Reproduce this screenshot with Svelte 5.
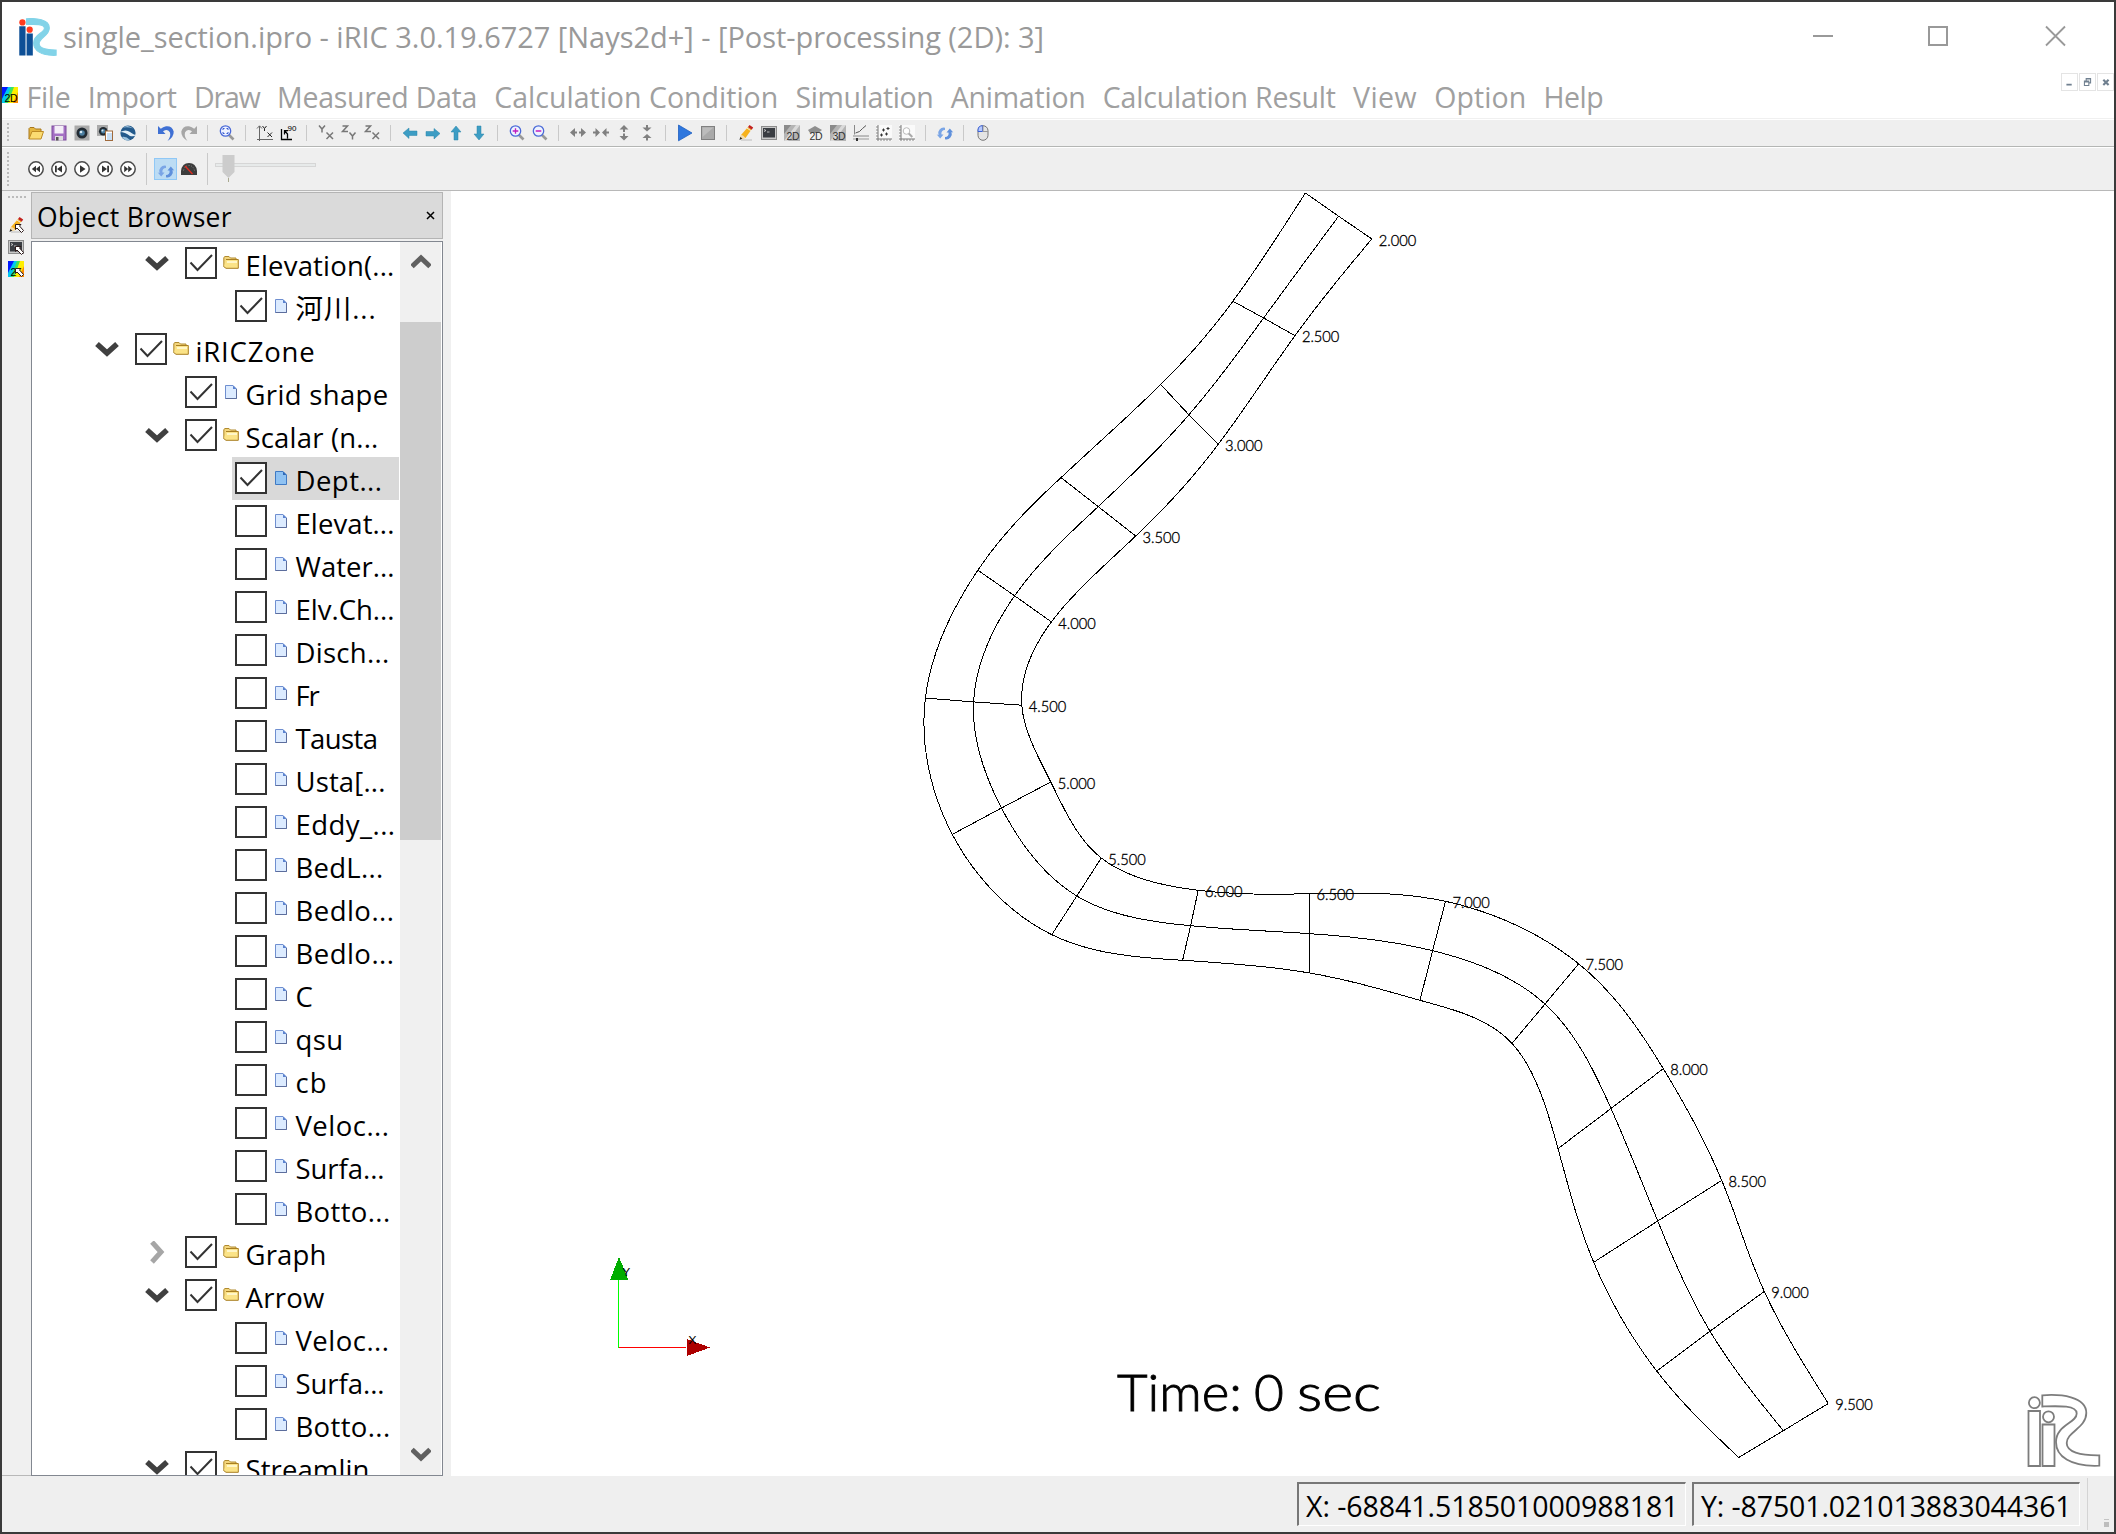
<script>
  const menus = [
    ['File', 44], ['Import', 89], ['Draw', 66], ['Measured Data', 200],
    ['Calculation Condition', 284], ['Simulation', 138], ['Animation', 135],
    ['Calculation Result', 233], ['View', 64], ['Option', 92], ['Help', 60]
  ];

  const toolbar = [
    'open', 'save', 'camera', 'cameraCopy', 'earth', '|', 'undo', 'redo', '|', 'fit', '|',
    'axes', 'rot90', '|', 'yx', 'zy', 'zx', '|', 'left', 'right', 'up', 'down', '|',
    'zoomIn', 'zoomOut', '|', 'widen', 'narrow', 'taller', 'shorter', '|', 'play', 'stop', '|',
    'pencil', 'terminal', 'post2d', 'bird2d', 'post3d', 'graph', 'scatter', 'graphZoom', '|',
    'reload', '|', 'mouse'
  ];
  const player = ['first', 'prev', 'playRound', 'next', 'last'];
  const sideTools = ['pencilPick', 'terminalPick', 'colorPick'];

  // [label, level, kind, checked, text width, expander, selected]
  const rows = [
    ['Elevation(...', 4, 'folder', true, 149, 'open'],
    ['河川...', 5, 'page', true, 81],
    ['iRICZone', 3, 'folder', true, 120, 'open'],
    ['Grid shape', 4, 'page', true, 143],
    ['Scalar (n...', 4, 'folder', true, 133, 'open'],
    ['Dept...', 5, 'page', true, 87, '', true],
    ['Elevat...', 5, 'page', false, 99],
    ['Water...', 5, 'page', false, 99],
    ['Elv.Ch...', 5, 'page', false, 99],
    ['Disch...', 5, 'page', false, 94],
    ['Fr', 5, 'page', false, 23],
    ['Tausta', 5, 'page', false, 82],
    ['Usta[...', 5, 'page', false, 90],
    ['Eddy_...', 5, 'page', false, 100],
    ['BedL...', 5, 'page', false, 88],
    ['Bedlo...', 5, 'page', false, 99],
    ['Bedlo...', 5, 'page', false, 99],
    ['C', 5, 'page', false, 18],
    ['qsu', 5, 'page', false, 48],
    ['cb', 5, 'page', false, 32],
    ['Veloc...', 5, 'page', false, 94],
    ['Surfa...', 5, 'page', false, 89],
    ['Botto...', 5, 'page', false, 95],
    ['Graph', 4, 'folder', true, 81, 'closed'],
    ['Arrow', 4, 'folder', true, 79, 'open'],
    ['Veloc...', 5, 'page', false, 94],
    ['Surfa...', 5, 'page', false, 89],
    ['Botto...', 5, 'page', false, 95],
    ['Streamlin...', 4, 'folder', true, 146, 'open']
  ].map(([label, level, kind, checked, width, expander, selected]) =>
    ({ label, level, kind, checked, width, expander, selected }));

  // River cross sections: left bank, centre, right bank
  const sections = [
    ['2.000', 1305.4, 193, 1338.6, 216.2, 1371.8, 238.9],
    ['2.500', 1232.9, 301.2, 1263.6, 318, 1295, 335.7],
    ['3.000', 1160.7, 384.5, 1188.9, 414.8, 1218.2, 444.3],
    ['3.500', 1061, 477.6, 1098.2, 506.6, 1135.7, 536],
    ['4.000', 977.9, 570.2, 1014.6, 595.8, 1051.4, 621.9],
    ['4.500', 925.4, 698.1, 973.6, 701.9, 1021.8, 705.2],
    ['5.000', 952.3, 834.4, 1001.5, 808, 1050.8, 782],
    ['5.500', 1051.8, 934.7, 1076.8, 896, 1101.3, 858],
    ['6.000', 1182.6, 960.3, 1190.6, 925.7, 1198.2, 890.3],
    ['6.500', 1309.6, 973, 1309.6, 933.7, 1309.6, 893.7],
    ['7.000', 1420, 1000.3, 1432.6, 950.7, 1445.5, 901.3],
    ['7.500', 1512, 1043.4, 1545, 1004, 1578.7, 963.8],
    ['8.000', 1558, 1148.6, 1611, 1108.5, 1663.3, 1068.7],
    ['8.500', 1593.7, 1262.3, 1657.7, 1221, 1721.7, 1180.4],
    ['9.000', 1656.7, 1371, 1710, 1331.2, 1764.3, 1291.4],
    ['9.500', 1738.7, 1457.5, 1783.3, 1430.7, 1828.3, 1403.5]
  ];

  const stations = [0];
  for (let i = 1; i < sections.length; i++) {
    const a = sections[i - 1], b = sections[i];
    stations.push(stations[i - 1] + Math.hypot(b[3] - a[3], b[4] - a[4]));
  }

  // Second derivatives of a natural cubic spline over the stations
  function secondDerivatives(y) {
    const n = y.length, t = stations, m = Array(n).fill(0), u = Array(n).fill(0);
    for (let i = 1; i < n - 1; i++) {
      const s = (t[i] - t[i - 1]) / (t[i + 1] - t[i - 1]);
      const p = s * m[i - 1] + 2;
      m[i] = (s - 1) / p;
      const d = (y[i + 1] - y[i]) / (t[i + 1] - t[i]) - (y[i] - y[i - 1]) / (t[i] - t[i - 1]);
      u[i] = ((6 * d) / (t[i + 1] - t[i - 1]) - s * u[i - 1]) / p;
    }
    m[n - 1] = 0;
    for (let k = n - 2; k >= 0; k--) m[k] = m[k] * m[k + 1] + u[k];
    return m;
  }

  function curve(col) {
    const xs = sections.map((s) => s[col]), ys = sections.map((s) => s[col + 1]);
    const mx = secondDerivatives(xs), my = secondDerivatives(ys);
    const pts = [];
    const at = (v, m, i, b) => {
      const h = stations[i + 1] - stations[i], a = 1 - b;
      return a * v[i] + b * v[i + 1] + ((a ** 3 - a) * m[i] + (b ** 3 - b) * m[i + 1]) * h * h / 6;
    };
    for (let i = 0; i < sections.length - 1; i++)
      for (let k = 0; k < 12; k++)
        pts.push(`${at(xs, mx, i, k / 12).toFixed(1)},${at(ys, my, i, k / 12).toFixed(1)}`);
    pts.push(`${xs.at(-1)},${ys.at(-1)}`);
    return pts.join(' ');
  }
  const curves = [curve(1), curve(3), curve(5)];

  // Spreads a label over the width it has in the native font
  function fit(node, width) {
    const natural = node.getBoundingClientRect().width;
    const n = [...node.textContent].length;
    node.style.letterSpacing = `${(width - natural) / n}px`;
  }

  const ring = '<circle cx="8" cy="8" r="7.200" fill="#fff" stroke="#4a4a4a" stroke-width="1.500"/>';
  const lens = (x = '') => `<path d="M9.500 9.500l5 5" stroke="#999" stroke-width="2.600"/><circle cx="6.500" cy="6" r="5.200" fill="#eef2ff" stroke="#4a6ad8" stroke-width="1.300"/>${x}`;
  const pencil = '<path d="M3 15h11" stroke="#ccc" stroke-width="1.500"/><path d="M3 10l7-8 3.500 2.500-6 8.500L2 14z" fill="#f7b21c"/><path d="M3 10l2 .5 2.500 2.500L2 14z" fill="#f3dcae"/><path d="M1.500 15l.8-3 2 1.600z" fill="#222"/><path d="M10 2l1.500-2 3.700 2.500-1.500 2.300z" fill="#c2221e"/><path d="M9 3l3.700 2.600" stroke="#eee"/>';
  const terminal = '<rect x=".5" y="1.500" width="15" height="13" fill="#c8c8c8" stroke="#8c8c8c"/><rect x="2" y="3" width="12" height="9.500" fill="#3a3d42"/><path d="M3 4.500l2 1-2 1M6 7h2.500" stroke="#ddd" fill="none" stroke-width=".8"/>';
  const cursor = '<path d="M7.500 7.500h5.500l-1.500 1.500 4 4.500-2 2-4.500-4.500-1.500 1.500z" fill="#fff" stroke="#2d1a1a" stroke-width="1"/>';
  const rainbow = '<path d="M0 0h16v16H0z" fill="#00c8f0"/><path d="M0 0h6L0 12z" fill="#0018ff"/><path d="M9 0h7v16H3z" fill="#3fe35a"/><path d="M12 0h4v16H6z" fill="#ffee00"/><path d="M16 5v11H11z" fill="#ff8a00"/>';
  const word = (t, fill = '#333') => `<text x="2.500" y="14.500" font-size="10.500" font-family="Liberation Sans" textLength="13" fill="${fill}">${t}</text>`;
  const slab = '<rect width="16" height="16" fill="#b4b4b4"/><path d="M0 0h7L0 9z" fill="#8a8a8a"/><path d="M12 0h4L4 16H0z" fill="#dadada"/>';
  const gray = (d) => `<path d="${d}" fill="#808080"/>`;
  const blue = (d) => `<path d="${d}" fill="#3d9dc4" stroke="#2b86ab" stroke-width=".5"/>`;
  const cycle = '<path d="M1.500 10A5.500 5.500 0 0 1 8 2.800V5A3.500 3.500 0 0 0 4.500 9.500H6.500L3.200 13.500-.3 9.500z" fill="#7aa5e6"/><path d="M14.500 7A5.500 5.500 0 0 1 8 14.200V12a3.500 3.500 0 0 0 3.500-4.500H9.500L12.800 3.500l3.500 4z" fill="#5f90dc"/>';
  const letters = (a, b) => `<path d="${a}${b}" fill="none" stroke="#777" stroke-width="1.500"/>`;
  const Yt = 'M1 .5l3 3.500 3-3.500M4 4v3.500', Zt = 'M1.500 1h5l-5 5.500h5.500', Xb = 'M8.500 7.500l6.500 6.500M15 7.500l-6.500 6.500', Yb = 'M8.500 7.500l3 3.500 3-3.500M11.500 11v3.500';
  const chart = '<path d="M0 0h16v16H0z" fill="#fafafa"/><path d="M2 0v16M0 14h16" stroke="#777" stroke-width="1"/><path d="M0 2h2M0 5h2M0 8h2M0 11h2M5 14v2M8 14v2M11 14v2M14 14v2" stroke="#888"/>';
  const cam = '<circle cx="8" cy="8" r="5.500" fill="#222b33"/><circle cx="8" cy="8" r="2.800" fill="#4b7ea0"/><circle cx="7" cy="7" r="1.300" fill="#d8eaf4"/>';

  const icons = {
    open: '<path d="M1 14V3.500l1-1h4l1.500 1.500H13v2.500" fill="#e5b740" stroke="#a8781e"/><path d="M1 14L4 6.500h11.500L13 14z" fill="#fbdc72" stroke="#bd8b25"/>',
    save: '<rect x="1" y="1" width="14" height="14" fill="#a470c4" stroke="#7d4b9c"/><rect x="3.500" y="1" width="9" height="7.500" fill="#f4eef8"/><rect x="4" y="11" width="8" height="4.500" fill="#ddd"/><rect x="5" y="12" width="2.500" height="3.500" fill="#555"/>',
    camera: `<rect x=".5" y=".5" width="15" height="15" rx="1" fill="#aaa" stroke="#ccc"/>${cam}`,
    cameraCopy: `<g transform="scale(.78)"><rect width="14" height="14" fill="#aaa"/>${cam}</g><rect x="8.500" y="6" width="7" height="9.500" fill="#fff" stroke="#a06a3c"/><rect x="10" y="8" width="5" height="7" fill="#c9dff5"/>`,
    earth: '<circle cx="8" cy="8" r="7.600" fill="#245a8c"/><path d="M0 7q6-3 10 0t6 3q-2 2-6 1-5-4-10-4z" fill="#e4f0f8"/><path d="M3 2.500Q8-1 13 3.500 8 1.500 3 2.500zM2 12q4-1 8 3-5 1.500-8-3z" fill="#9ec3dd"/>',
    undo: '<path d="M0 1v8h7.500L5 6.300Q10 3 12 7.500q1 4-2.500 8.500Q16 12 15.700 6.500 14 .5 8 1.200 5 1.700 2.800 3.700z" fill="#3f70d4"/>',
    redo: '<path d="M16 1v8H8.500L11 6.300Q6 3 4 7.500q-1 4 2.500 8.500Q0 12 .3 6.500 2 .5 8 1.200q3 .5 5.200 2.500z" fill="#a6a6a6"/>',
    fit: lens('<path d="M4 5V3.500h1.500M7.500 3.500H9V5M9 7v1.500H7.500M5.500 8.500H4V7" stroke="#3558d0" fill="none"/>'),
    axes: '<path d="M2.500 16V1M0 3.500L2.500 .8 5 3.500M0 14.500h16" fill="none" stroke="#666"/><path d="M5.500 1l2 2.500 2-2.500M7.500 3.500V6M10.500 7.500l4.500 4.500M15 7.500l-4.500 4.500" stroke="#222" fill="none"/>',
    rot90: '<path d="M1.500 4v10.500H12M7.500 13.500V9L5 6M4.500 9.500V5.700h3.500" fill="none" stroke="#000" stroke-width="1.300"/><text x="7.500" y="5.500" font-size="8" font-family="Liberation Sans">90</text>',
    yx: letters(Yt, Xb), zy: letters(Zt, Yb), zx: letters(Zt, Xb),
    left: blue('M1 8l6-5v3h8v4.500H7v3z'), right: blue('M15 8.500l-6-5v3H1V11h8v3z'),
    up: blue('M8 1l5 6h-3v8H6V7H3z'), down: blue('M8 15l5-6h-3V1H6v8H3z'),
    zoomIn: lens('<path d="M3.700 6h5.600M6.500 3.200v5.600" stroke="#c01cc0" stroke-width="1.300"/>'),
    zoomOut: lens('<path d="M3.700 6h5.600" stroke="#c01cc0" stroke-width="1.500"/>'),
    widen: gray('M0 7.500l5-4.500v3.500h2v2H5V12zM16 7.500L11 3v3.500H9v2h2V12z'),
    narrow: gray('M7 7.500L2.500 3v3.500H0v2h2.500V12zM9 7.500L13.500 3v3.500H16v2h-2.500V12z'),
    taller: gray('M8 0l4.500 4.500H9V7H7V4.500H3.500zM8 15.500L3.500 11H7V8.500h2V11h3.500z'),
    shorter: gray('M8 6.500L3.500 2.500H7V0h2v2.500h3.500zM8 9l4.500 4H9v2.500H7V13H3.500z'),
    play: '<path d="M1.500 0L15 8 1.500 15.800z" fill="#2e77de" stroke="#1f5fc0" stroke-width=".8"/>',
    stop: '<rect x="1.500" y="1.500" width="13" height="13" fill="#a9a9a9" stroke="#808080"/><path d="M2.500 2.500h11L2.500 12z" fill="#bcbcbc"/>',
    pencil, terminal,
    post2d: slab + word('2D'),
    bird2d: `<path d="M1 5l7-4 7 4-4 3H3z" fill="#8f8f8f"/>${word('2D')}`,
    post3d: slab + word('3D'),
    graph: '<path d="M1.500 0v9.500M0 11h16" stroke="#888"/><path d="M2.500 8l4-1.500 3-3L13 .5" stroke="#555" fill="none"/><path d="M0 14h16" stroke="#999"/><path d="M3 13h2v3H3z" fill="#333"/>',
    scatter: chart + '<path d="M4 10h3M5.500 8.500v3M6 5h3M7.500 3.500v3M9 9h3M10.500 7.500v3M10.500 3.500h3M12 2v3" stroke="#333"/>',
    graphZoom: chart + '<circle cx="7.500" cy="6" r="3.300" fill="#fff" stroke="#bbb"/><path d="M9.800 8.500l3.500 3.500" stroke="#aaa" stroke-width="2"/>',
    reload: cycle,
    mouse: '<rect x="3" y=".7" width="10" height="14.600" rx="5" fill="#e4e4e4" stroke="#777"/><path d="M3 6.500V5a4.500 4.500 0 0 1 4.500-4.300v5.800z" fill="#b4c8ff" stroke="#3c62d8"/><path d="M8 1v5.500h5" stroke="#999" fill="none"/>',
    first: ring + '<path d="M8 4.800v6.400L3.800 8zM12 4.800v6.400L7.800 8z" fill="#333"/>',
    prev: ring + '<path d="M4 4.800h1.800v6.400H4zM11 4.500v7L6 8z" fill="#333"/>',
    playRound: ring + '<path d="M6 4.300v7.400L11.500 8z" fill="#333"/>',
    next: ring + '<path d="M12 4.800h-1.800v6.400H12zM5 4.500v7L10 8z" fill="#333"/>',
    last: ring + '<path d="M4.200 4.800v6.400L8.200 8zM8.200 4.800v6.400l4-3.200z" fill="#333"/>',
    gauge: '<path d="M0 14V10Q1 2 8 2t8 8v4z" fill="#3c3c3c"/><path d="M2.500 9.500Q4 4.500 8 4.500t5.500 5" stroke="#888" fill="none" stroke-dasharray="1 1.500"/><path d="M4 5l7.500 8" stroke="#e02b20" stroke-width="1.300"/>',
    pencilPick: pencil + cursor,
    terminalPick: terminal + cursor,
    colorPick: rainbow + word('2', '#000') + cursor,
    color2d: rainbow + word('2D', '#000'),
    folder: '<path d="M.8 12V2.500L2 1.500h4L7.500 3H13v2" fill="#f3d57c" stroke="#b08a2e"/><path d="M3 4.500h12.300v8.800H3l-2-1.500" fill="#fbe387" stroke="#a97f22"/><path d="M4 6h10v2H4z" fill="#fff6c8"/>',
    page: '<path d="M2.500 1.500h7.500l3.500 3.500v9.500h-11z" fill="#dcebff" stroke="#6f8fd0"/><path d="M10 1.500V5h3.500z" fill="#5b82cf"/><path d="M13.500 5v9.500h-11" stroke="#5c6d9c" fill="none"/>',
    pageSelected: '<path d="M2.500 1.500h7.500l3.500 3.500v9.500h-11z" fill="#8fc2f2" stroke="#3f7ac4"/><path d="M10 1.500V5h3.500z" fill="#2f69b8"/>'
  };

  const ribbon = 'M42.300 15.300C60 14 86.300 16 86.300 33C86.300 48 66.700 52 66.700 63C66.700 72 80 75.500 99.300 75.300V85.700C70 87 56 76 56 62C56 45 76.700 43 76.700 33.500C76.700 25 58 26 42.300 26.500Z';
</script>

{#snippet icon(name)}
  <svg class="icon" viewBox="0 0 16 16">{@html icons[name]}</svg>
{/snippet}

<div class="window">
  <header class="titlebar">
    <svg class="logo" viewBox="27 14 73 73">
      <path d={ribbon} fill="#82d3e8" stroke="#82d3e8" stroke-width="2" />
      <path d="M28.500 30h12v56h-12zM42.500 44h12v42h-12z" fill="#0d4f96" />
      <circle cx="34.500" cy="22.500" r="6" fill="#ff3b1f" /><circle cx="48.500" cy="36.500" r="6" fill="#ff3b1f" />
    </svg>
    <span class="title" use:fit={981}>single_section.ipro - iRIC 3.0.19.6727 [Nays2d+] - [Post-processing (2D): 3]</span>
    <svg class="controls" viewBox="0 0 254 22">
      <g fill="none" stroke="#999" stroke-width="2">
        <path d="M0 11h20M116 2h18v18h-18z" />
        <path d="M233 1.500l19 19M252 1.500l-19 19" stroke-width="1.800" />
      </g>
    </svg>
  </header>

  <nav class="menubar">
    <div class="docicon">{@render icon('color2d')}</div>
    {#each menus as [label, width]}
      <span class="menu" use:fit={width}>{label}</span>
    {/each}
    <div class="mdi">
      <svg viewBox="0 0 17 18"><path d="M5 12h6" stroke="#708090" stroke-width="2" /></svg>
      <svg viewBox="0 0 17 18"><path d="M5 8h5v5H5zM5 9h5M7 8V5h5v5h-2M7 5.500h5" fill="none" stroke="#708090" stroke-width="1.200" /></svg>
      <svg viewBox="0 0 17 18"><path d="M6 6.500l6 6M12 6.500l-6 6" stroke="#708090" stroke-width="2.400" /></svg>
    </div>
  </nav>

  <div class="toolbar">
    <i class="grip"></i>
    {#each toolbar as name}
      {#if name === '|'}<i class="sep"></i>{:else}<span class="tool">{@render icon(name)}</span>{/if}
    {/each}
  </div>

  <div class="toolbar player">
    <i class="grip"></i>
    {#each player as name}<span class="tool">{@render icon(name)}</span>{/each}
    <i class="sep"></i>
    <span class="tool active">{@render icon('reload')}</span>
    <span class="tool">{@render icon('gauge')}</span>
    <i class="sep"></i>
    <svg class="slider" viewBox="0 0 102 32">
      <rect x=".5" y="10.500" width="100" height="3" fill="#e7eaea" stroke="#d6d6d6" />
      <path d="M7.500 2h12v17l-6 6-6-6z" fill="#ccc" />
      <path d="M13.500 25v4" stroke="#a9a98f" />
    </svg>
  </div>

  <main>
    <aside class="sidebar">
      <i class="hgrip"></i>
      {#each sideTools as name}<span class="sidetool">{@render icon(name)}</span>{/each}
    </aside>

    <section class="dock">
      <div class="dockhead">
        <span class="docktitle" use:fit={195}>Object Browser</span>
        <svg class="dockclose" viewBox="0 0 9 9"><path d="M1 1l7 7M8 1L1 8" stroke="#000" stroke-width="1.500" /></svg>
      </div>
      <div class="treebox">
        <div class="tree">
          {#each rows as row}
            <div class="row level{row.level}">
              <span class="expander">
                {#if row.expander === 'open'}
                  <svg viewBox="0 0 24 24"><path d="M2 6l10 9L22 6" fill="none" stroke="#404040" stroke-width="5.500" /></svg>
                {:else if row.expander === 'closed'}
                  <svg viewBox="0 0 24 24"><path d="M7 1l9 10L7 21" fill="none" stroke="#a6a6a6" stroke-width="5" /></svg>
                {/if}
              </span>
              <div class="entry" class:selected={row.selected}>
                <span class="check">
                  {#if row.checked}
                    <svg viewBox="0 0 28 28"><path d="M3.500 13.500l7 7.500L25 6" fill="none" stroke="#333" stroke-width="2" /></svg>
                  {/if}
                </span>
                <span class="kind">{@render icon(row.selected ? 'pageSelected' : row.kind)}</span>
                <span class="label" use:fit={row.width}>{row.label}</span>
              </div>
            </div>
          {/each}
        </div>
        <div class="scrollbar">
          <svg viewBox="0 0 20 18"><path d="M1 12.500L10 4l9 8.500" fill="none" stroke="#606060" stroke-width="5" /></svg>
          <div class="thumb"></div>
          <svg viewBox="0 0 20 18"><path d="M1 4.500L10 13l9-8.500" fill="none" stroke="#606060" stroke-width="5" /></svg>
        </div>
      </div>
    </section>

    <svg class="canvas" viewBox="451 191 1663 1285">
      <g class="mesh">
        {#each curves as points}<polyline {points} />{/each}
        {#each sections as s}<polyline points="{s[1]},{s[2]} {s[3]},{s[4]} {s[5]},{s[6]}" />{/each}
      </g>
      <g class="stations">
        {#each sections as s}
          <text x={s[5] + 6.9} y={s[6] + 6.6} textLength="37.500" lengthAdjust="spacingAndGlyphs">{s[0]}</text>
        {/each}
      </g>
      <path d="M618.500 1348V1280" stroke="#00ff00" shape-rendering="crispEdges" />
      <path d="M619 1347.500H686" stroke="#ff0000" shape-rendering="crispEdges" />
      <path d="M619 1257l9.500 23h-18.500z" fill="#00ad00" shape-rendering="crispEdges" />
      <path d="M687 1339l23 8.500-23 8.500z" fill="#ad0000" shape-rendering="crispEdges" />
      <text class="axis" x="622.500" y="1276">Y</text>
      <text class="axis" x="688.500" y="1344">X</text>
      <g class="time">
        <text x="1117" y="1410.500" textLength="125" lengthAdjust="spacingAndGlyphs">Time:</text>
        <text x="1254" y="1410.500">0</text>
        <text x="1297" y="1410.500" textLength="84" lengthAdjust="spacingAndGlyphs">sec</text>
      </g>
      <g transform="translate(2000 1380)" fill="#fff" stroke="#7d7d7d" stroke-width="1.800">
        <path d={ribbon} />
        <path d="M28.500 31h11.500v55H28.500zM42.500 44.500h12v41.500h-12z" />
        <circle cx="34.400" cy="22.700" r="5.500" /><circle cx="48.500" cy="36.800" r="5.500" />
      </g>
    </svg>
  </main>

  <footer>
    <div class="coord x"><span use:fit={372.5}>X: -68841.518501000988181</span></div>
    <div class="coord y"><span use:fit={370.5}>Y: -87501.021013883044361</span></div>
    <i class="footsep"></i>
    <svg class="sizegrip" viewBox="0 0 6 9"><path d="M0 .5h5" stroke="#c4c4c4" /><path d="M0 3h5v5H0z" fill="#bdbdbd" /></svg>
  </footer>
</div>

<style>
  :global(body) { background: #3a3a3a; overflow: hidden; }
  .window {
    box-sizing: border-box; width: 2116px; height: 1534px; border: 2px solid #3a3a3a;
    background: #f0f0f0; display: flex; flex-direction: column;
    font-family: "Open Sans", "Noto Sans", "Noto Sans CJK JP", sans-serif; color: #000; white-space: nowrap;
  }
  svg { display: block; flex: none; }
  i { display: block; flex: none; }
  .icon { width: 16px; height: 16px; overflow: visible; }

  .titlebar { height: 71px; background: #fff; display: flex; align-items: flex-start; padding: 0 47px 0 16px; flex: none; }
  .logo { width: 39px; height: 38px; margin: 16px 6px 0 0; }
  .title { font-size: 29px; line-height: 70px; color: #999; }
  .controls { width: 254px; height: 22px; margin: 23px 0 0 auto; }

  .menubar { height: 45px; background: #fff; display: flex; align-items: flex-start; flex: none; border-bottom: 1px solid #f0f0f0; }
  .docicon { width: 16px; margin: 14px 8.5px 0 0; overflow: hidden; }
  .menu { font-size: 28.5px; line-height: 49px; color: #a0a0a0; margin-right: 17.2px; }
  .mdi { display: flex; gap: 1px; margin-left: auto; }
  .mdi svg { width: 15px; height: 16px; border: 1px solid #e4e4e4; }

  .toolbar { box-sizing: border-box; height: 28px; border-top: 1px solid #fff; border-bottom: 1px solid #b4b6b4; display: flex; align-items: center; flex: none; background: #efefef; }
  .player { height: 44px; border-bottom-color: #b8b8b8; }
  .grip { width: 2px; height: 20px; margin: 0 15px 0 5px; background: repeating-linear-gradient(#bbb 0 2px, #efefef 2px 4px); }
  .player .grip { height: 34px; }
  .tool { width: 23px; height: 22px; display: flex; align-items: center; justify-content: center; flex: none; }
  .active { box-sizing: border-box; background: #bcdcf4; border: 1px solid #90c8f6; }
  .active .icon { margin-top: 4px; }
  .sep { width: 1px; height: 16px; margin: 0 7px; background: #c9c9c9; }
  .player .sep { height: 32px; }
  .slider { width: 102px; height: 32px; }

  main { display: flex; height: 1285px; flex: none; }
  .sidebar { box-sizing: border-box; width: 29px; border-bottom: 1px solid #b8b8b8; padding: 5px 0 0 6px; }
  .hgrip { width: 18px; height: 2px; background: repeating-linear-gradient(90deg, #bbb 0 2px, #efefef 2px 4px); margin-bottom: 19px; }
  .sidetool { display: block; height: 22px; }

  .dock { width: 412px; margin-right: 8px; padding-top: 1px; box-sizing: border-box; display: flex; flex-direction: column; gap: 2px; }
  .dockhead { box-sizing: border-box; height: 47px; background: #dadada; border: 1px solid #b4b4b4; display: flex; align-items: center; justify-content: space-between; padding: 0 7px 0 5px; font-size: 26.5px; }
  .docktitle { line-height: 45px; padding-top: 4px; }
  .dockclose { width: 9px; height: 9px; }
  .treebox { box-sizing: border-box; height: 1235px; background: #fff; border: 1px solid #828790; display: flex; justify-content: space-between; overflow: hidden; }
  .tree { width: 367px; overflow: hidden; }
  .row { height: 43px; display: flex; }
  .level3 { padding-left: 60px; }
  .level4 { padding-left: 110px; }
  .level5 { padding-left: 160px; }
  .expander { width: 40px; padding: 10px 0 0 3px; flex: none; box-sizing: border-box; }
  .expander svg { width: 24px; height: 24px; }
  .entry { flex: 1; display: flex; align-items: flex-start; padding-left: 3px; }
  .selected { background: #d9d9d9; }
  .check { box-sizing: border-box; width: 32px; height: 32px; margin-top: 5px; border: 2px solid #333; background: #fff; flex: none; }
  .kind { margin: 13px 0 0 6px; width: 22.5px; flex: none; }
  .label { font-size: 27.5px; line-height: 47px; height: 43px; }
  .scrollbar { width: 41px; background: #f0f0f0; display: flex; flex-direction: column; align-items: center; }
  .treebox { padding-right: 1px; }
  .scrollbar svg { width: 20px; height: 18px; margin: 12px 0 12px; }
  .scrollbar .thumb { width: 41px; height: 518px; background: #cdcdcd; margin: 38px 0 auto; }

  .canvas { width: 1663px; height: 1285px; background: #fff; }
  .mesh { fill: none; stroke: #000; stroke-width: 1; shape-rendering: crispEdges; }
  .stations text { font-family: Lato, sans-serif; font-weight: 300; font-size: 15.5px; fill: #000; stroke: #000; stroke-width: 0.35; }
  .axis { font-family: Lato, sans-serif; font-size: 12px; }
  .time { font-family: Lato, sans-serif; font-weight: 300; font-size: 51.5px; stroke: #000; stroke-width: 0.9; }

  footer { flex: 1; display: flex; align-items: flex-start; justify-content: flex-end; background: #efefef; }
  .coord { box-sizing: border-box; height: 44px; margin-top: 6px; border: 1px solid #fff; border-top: 2px solid #777; border-left: 2px solid #777; font-size: 28.5px; line-height: 45px; padding-left: 7px; }
  .x { width: 389px; margin-right: 6px; }
  .y { width: 388px; margin-right: 7px; }
  .footsep { width: 1px; height: 52px; margin-top: 2px; background: #d4d4d4; margin-right: 16px; }
  .sizegrip { width: 6px; height: 9px; margin: 43px 4px 0 0; }
</style>
